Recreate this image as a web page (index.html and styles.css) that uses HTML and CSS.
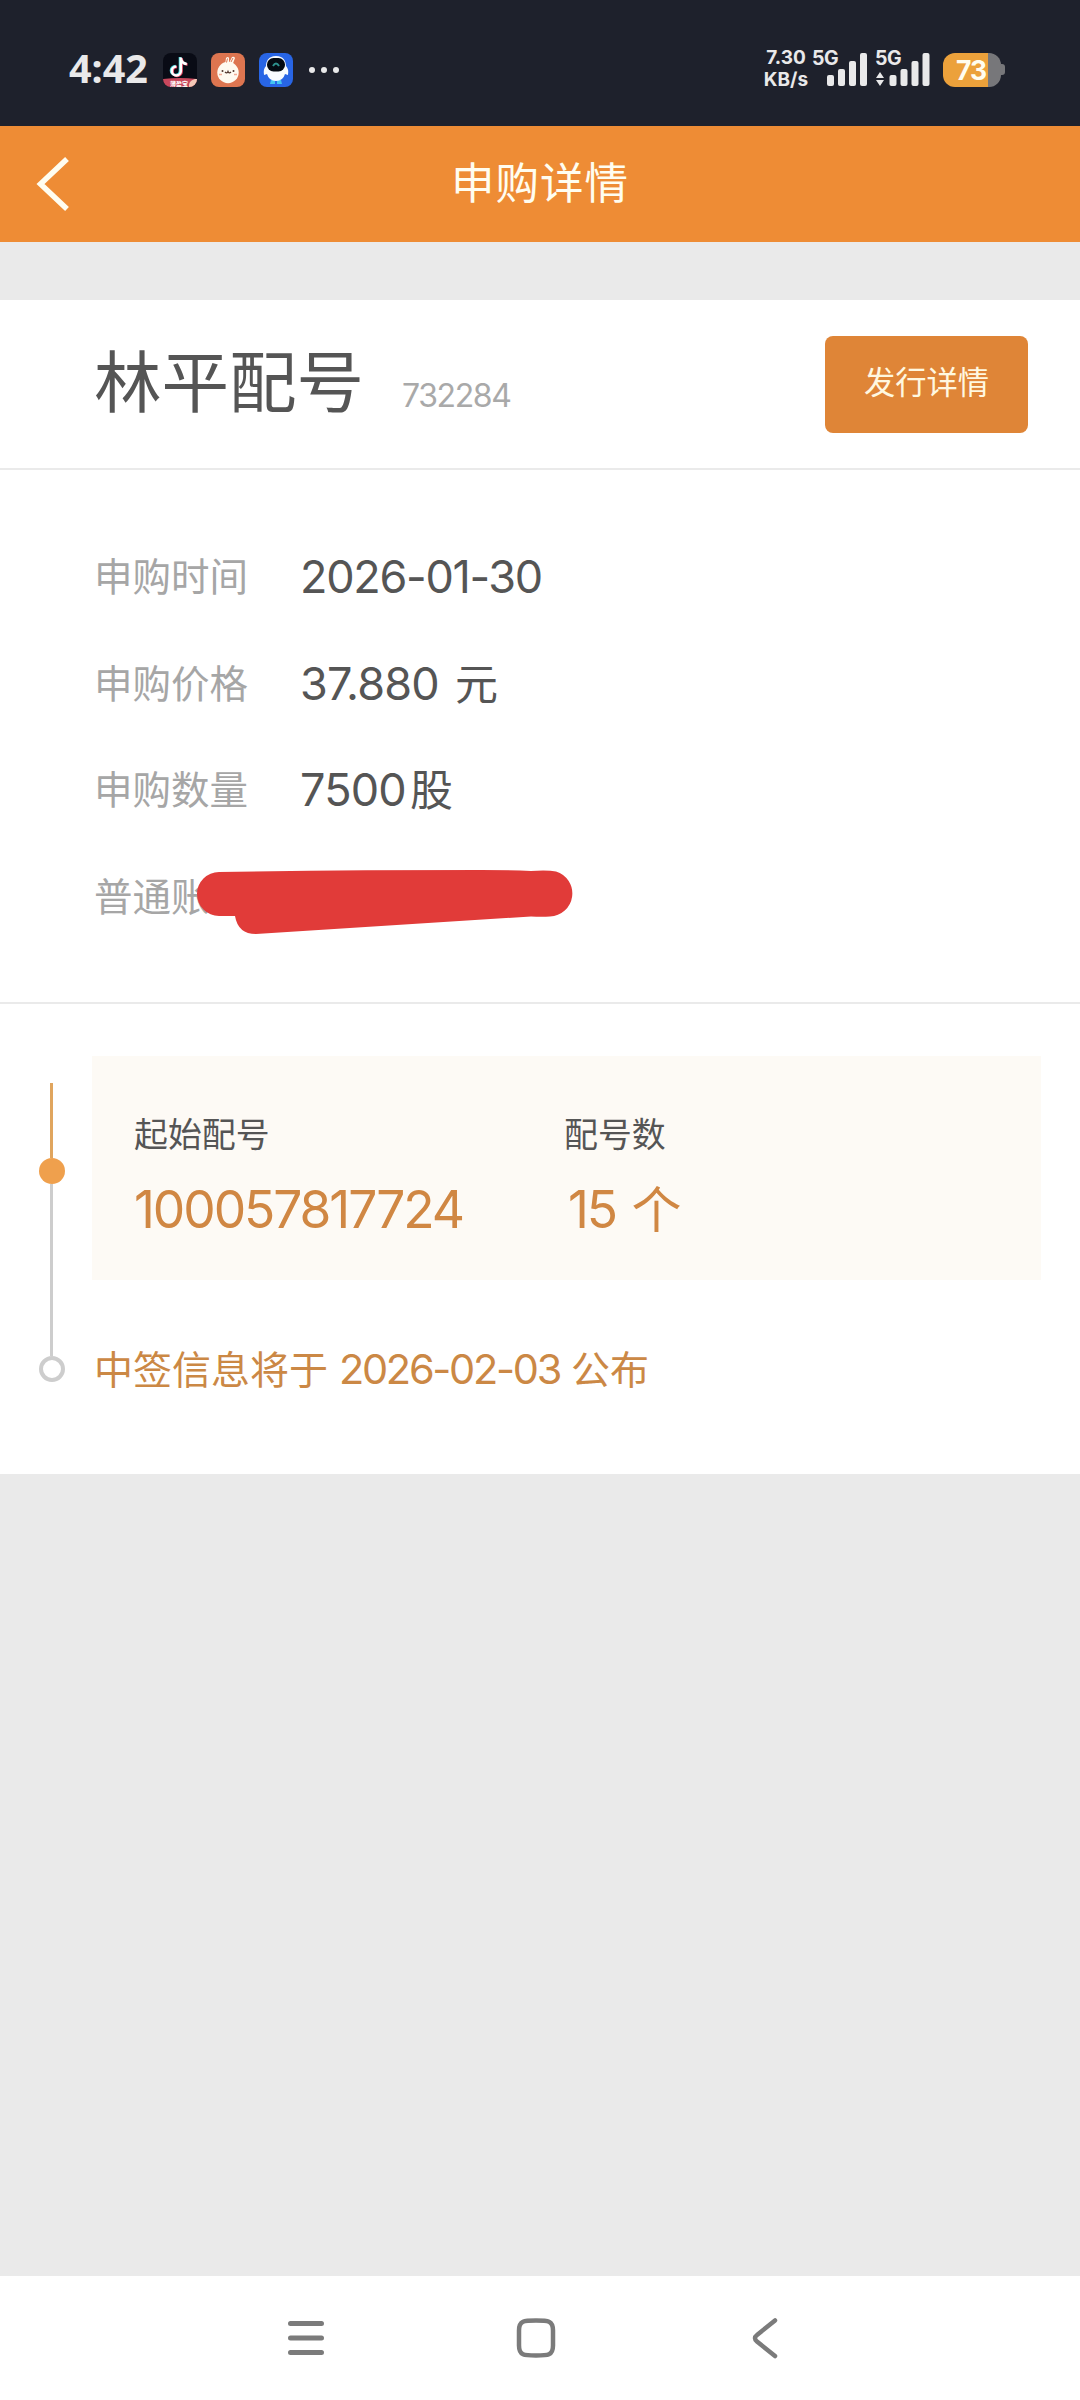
FILE: index.html
```html
<!DOCTYPE html>
<html lang="zh-CN">
<head>
<meta charset="utf-8">
<meta name="viewport" content="width=device-width, initial-scale=1">
<title>申购详情</title>
<link rel="stylesheet" href="styles.css">
</head>
<body>
<div class="status-bar">
  <span class="clock">4:42</span>
  <div class="apps">
    <svg width="34" height="34" viewBox="0 0 34 34">
      <defs><clipPath id="app"><rect width="34" height="34" rx="8"/></clipPath></defs>
      <g clip-path="url(#app)">
        <rect width="34" height="34" fill="#090b15"/>
        <g fill="none" stroke-width="2.600">
          <path d="M17 4v13.500a4.500 4.500 0 1 1-4.500-4.500M17 5q1 5 6 5.500" stroke="#43d5dc"/>
          <path d="M18.600 5v13.500a4.500 4.500 0 1 1-4.500-4.500M18.600 6q1 5 6 5.500" stroke="#e74563"/>
          <path d="M17.800 4.500v13.500a4.500 4.500 0 1 1-4.500-4.500M17.800 5.500q1 5 6 5.500" stroke="#fff"/>
        </g>
        <path d="M0 26q17-2 34 0v8H0z" fill="#c9485d"/>
        <path d="M26 34q-1-6 6-8h2v8z" fill="#f5c9b8"/>
        <text class="app-label" x="7" y="32.500">薄盈宝</text>
      </g>
    </svg>
    <svg width="34" height="34" viewBox="0 0 34 34">
      <rect width="34" height="34" rx="8" fill="#dd7550"/>
      <g fill="#fffaf0">
        <path d="M14 12l1-7q2-2 3 0v5l3-6q2-1 3 1l-3 8z"/>
        <circle cx="17" cy="19.500" r="10.700"/>
      </g>
      <path d="M16.500 5.500l-1 4M22 5l-2 4" stroke="#dd7550"/>
      <circle cx="11.500" cy="18" r="1" fill="#54382f"/>
      <circle cx="22.500" cy="18" r="1" fill="#54382f"/>
      <path d="M14 19q2 2 3-.5q1 2.500 3 .5" fill="none" stroke="#54382f" stroke-width="1.300"/>
      <path d="M8 21.500h3M23 21.500h3" stroke="#f2ab95" stroke-width="1.500"/>
    </svg>
    <svg width="34" height="34" viewBox="0 0 34 34">
      <rect width="34" height="34" rx="8" fill="#2865e5"/>
      <path d="M12 27h4v4h-5zM18 27h4l1 4h-5z" fill="#43c4ef"/>
      <path d="M17 3c8 0 10 6 10 10q3 3 2 9l-3-1q-2 7-9 7t-9-7l-3 1q-1-6 2-9C7 9 9 3 17 3z" fill="#f8fbff"/>
      <rect x="8" y="5" width="18" height="13.500" rx="6.500" fill="#050b13"/>
      <path d="M14 13q3-5 6 0" fill="none" stroke="#2d918e" stroke-width="2"/>
    </svg>
  </div>
  <svg class="more" width="30" height="6" viewBox="0 0 30 6" fill="#e9e9ea">
    <circle cx="3" cy="3" r="3"/><circle cx="15" cy="3" r="3"/><circle cx="27" cy="3" r="3"/>
  </svg>
  <div class="speed"><span>7.30</span><span>KB/s</span></div>
  <div class="signal">
    <span>5G</span>
    <svg width="40" height="33" viewBox="0 0 40 33" fill="#e9e9ea">
      <rect y="22" width="7" height="11" rx="2"/>
      <rect x="11" y="16" width="7" height="17" rx="2"/>
      <rect x="22" y="8" width="7" height="25" rx="2"/>
      <rect x="33" width="7" height="33" rx="2"/>
    </svg>
  </div>
  <div class="signal second">
    <span>5G</span>
    <svg width="54" height="33" viewBox="0 0 54 33" fill="#e9e9ea">
      <path d="M0 25l4-6 4 6zM0 27h8l-4 6z"/>
      <rect x="13.500" y="22" width="7" height="11" rx="2"/>
      <rect x="24.500" y="16" width="7" height="17" rx="2"/>
      <rect x="35.500" y="8" width="7" height="25" rx="2"/>
      <rect x="46.500" width="7" height="33" rx="2"/>
    </svg>
  </div>
  <div class="battery"><span>73</span></div>
</div>

<div class="header">
  <svg class="back" width="36" height="56" viewBox="0 0 36 56">
    <path d="M33 3L6.500 28L33 53" fill="none" stroke="#fffdf0" stroke-width="5.500"/>
  </svg>
  <h1>申购详情</h1>
</div>

<div class="content">
  <div class="stock">
    <h2>林平配号</h2>
    <span class="code">732284</span>
    <button type="button">发行详情</button>
  </div>

  <div class="info">
    <div class="row"><span class="label">申购时间</span><span class="value"><span class="num">2026-01-30</span></span></div>
    <div class="row"><span class="label">申购价格</span><span class="value amount"><span class="num">37.880</span> 元</span></div>
    <div class="row"><span class="label">申购数量</span><span class="value amount"><span class="num">7500</span>股</span></div>
    <div class="row">
      <span class="label">普通账户</span>
      <svg class="mask" width="380" height="66" viewBox="0 0 380 66">
        <path d="M23 3Q150 1 285 1Q315 1 335 2Q352 1 360 2.500A23 23 0 0 1 354 47.500Q346 48 335 47.500L60 65Q42 65 39 47H23A22 22 0 0 1 23 3z" fill="#e13b39"/>
      </svg>
    </div>
  </div>

  <div class="result">
    <div class="timeline">
      <span class="line done"></span>
      <span class="dot"></span>
      <span class="line"></span>
      <span class="ring"></span>
    </div>
    <div class="steps">
      <div class="card">
        <div class="col">
          <span class="name">起始配号</span>
          <span class="big">100057817724</span>
        </div>
        <div class="col">
          <span class="name">配号数</span>
          <span class="big count">15 <span class="unit">个</span></span>
        </div>
      </div>
      <p class="notice">中签信息将于 <span class="num">2026-02-03</span> 公布</p>
    </div>
  </div>
</div>

<div class="nav-bar">
  <svg width="40" height="44" viewBox="0 0 40 44">
    <path d="M4.500 7.500h31M4.500 22h31M4.500 36.500h31" stroke="#7b7b7b" stroke-width="5" stroke-linecap="round"/>
  </svg>
  <svg width="40" height="44" viewBox="0 0 40 44">
    <path d="M20 4.500c12 0 17 0 17 10v15c0 10-5 10-17 10s-17 0-17-10v-15c0-10 5-10 17-10z" fill="none" stroke="#7b7b7b" stroke-width="4.500"/>
  </svg>
  <svg width="40" height="44" viewBox="0 0 40 44">
    <path d="M30 4.500L12 19q-4 3 0 6.500L30 40" fill="none" stroke="#7b7b7b" stroke-width="4.500" stroke-linecap="round"/>
  </svg>
</div>
</body>
</html>
```
FILE: styles.css
```css
* {
  box-sizing: border-box;
}
body {
  margin: 0;
  width: 1080px;
  height: 2400px;
  display: flex;
  flex-direction: column;
  background-color: #eaeaea;
  color: #555;
  font-family: Inter, "Noto Sans CJK SC", sans-serif;
  line-height: 1.2;
}
svg {
  display: block;
  flex: none;
}

/* phone status bar */
.status-bar {
  height: 126px;
  padding: 14px 75px 0 69px;
  display: flex;
  align-items: center;
  background-color: #1e212c;
  color: #e9e9ea;
  font-weight: 700;
  line-height: 1;
}
.clock {
  width: 94px;
  padding-bottom: 2px;
  font-family: "Noto Sans", sans-serif;
  font-size: 39.500px;
}
.apps {
  display: flex;
  gap: 14px;
}
.app-label {
  font-family: "Noto Sans CJK SC", sans-serif;
  font-size: 6px;
  fill: #fff;
}
.more {
  margin-left: 16px;
}
.speed {
  width: 48px;
  margin: 0 2px 3px auto;
  display: flex;
  flex-direction: column;
  align-items: center;
  gap: 3px;
  font-size: 19px;
}
.signal {
  width: 55px;
  height: 36px;
  display: flex;
  flex-direction: column;
  align-items: flex-end;
  font-size: 19.500px;
  letter-spacing: -0.5px;
}
.signal span {
  align-self: flex-start;
  height: 2px;
  margin-top: -3px;
  margin-bottom: 2px;
}
.signal.second {
  margin-left: 8px;
}
.battery {
  position: relative;
  width: 58px;
  height: 34px;
  margin: 0 4px 0 13px;
  padding-left: 13px;
  border-radius: 12px;
  background: linear-gradient(to right, #eca13b 45px, #77777a 45px);
  color: #fffdf0;
  font-size: 26.500px;
  line-height: 34px;
  letter-spacing: -1px;
}
.battery:after {
  position: absolute;
  content: "";
  left: 58px;
  top: 11px;
  width: 4px;
  height: 11px;
  border-radius: 0 3px 3px 0;
  background-color: #77777a;
}

.header {
  height: 116px;
  display: grid;
  grid-template-columns: 100px 1fr 100px;
  align-items: center;
  background-color: #ee8c35;
  color: #fffdf0;
}
.back {
  margin-left: 34px;
}
h1 {
  margin: 0 0 2px;
  text-align: center;
  font-size: 43.500px;
  font-weight: 400;
  letter-spacing: 1px;
}

.content {
  height: 1174px;
  margin-top: 58px;
  background-color: #fff;
}
.stock {
  height: 170px;
  padding: 0 52px 0 94px;
  display: flex;
  align-items: center;
  border-bottom: 2px solid #eaeaea;
}
h2 {
  margin: 0 0 3px;
  font-size: 67.500px;
  font-weight: 400;
  line-height: 160px;
}
.code {
  margin: 25px auto 0 38px;
  color: #a9a9a9;
  font-size: 32px;
  letter-spacing: -1.400px;
}
button {
  width: 203px;
  height: 97px;
  padding: 0 0 3px;
  border: none;
  border-radius: 8px;
  background-color: #df8537;
  color: #fff8e0;
  font-family: inherit;
  font-size: 31.300px;
  line-height: 40px;
}

.info {
  height: 534px;
  padding: 54px 94px 0;
  border-bottom: 2px solid #eaeaea;
}
.row {
  position: relative;
  height: 106.500px;
  display: flex;
  align-items: center;
}
.label {
  width: 206px;
  color: #a6a6a6;
  font-size: 38.500px;
}
.value {
  font-size: 43px;
  line-height: 60px;
}
.value .num {
  font-size: 45px;
  line-height: 1;
  letter-spacing: -1.300px;
}
.amount .num {
  margin-right: 4px;
  letter-spacing: -0.800px;
}
/* red marker stroke hiding the account */
.mask {
  position: absolute;
  left: 102px;
  top: 25px;
}

.result {
  display: flex;
  padding-top: 52px;
}
.timeline {
  width: 92px;
  padding: 27px 0 0 39px;
  display: flex;
  flex-direction: column;
}
.line {
  width: 3px;
  height: 172px;
  margin-left: 11px;
  background-color: #cdcdcd;
}
.line.done {
  height: 75px;
  background-color: #e0a55e;
}
.dot {
  width: 26px;
  height: 26px;
  border-radius: 50%;
  background-color: #efa04d;
}
.ring {
  width: 26px;
  height: 26px;
  border: 4px solid #cdcdcd;
  border-radius: 50%;
}
.card {
  width: 949px;
  height: 224px;
  padding: 53px 42px 0;
  display: flex;
  background-color: #fdfaf5;
}
.col {
  width: 430px;
  display: flex;
  flex-direction: column;
}
.name {
  height: 50px;
  font-size: 33.900px;
  line-height: 52px;
}
.big {
  height: 100px;
  color: #d08743;
  font-size: 51.500px;
  line-height: 100px;
  letter-spacing: -2.100px;
}
.count {
  padding-left: 4px;
}
.unit {
  margin-left: 3px;
  font-size: 50px;
}
.notice {
  margin: 62px 0 0 2px;
  color: #cb8845;
  font-size: 39px;
  line-height: 56px;
}
.notice .num {
  font-size: 41.500px;
  letter-spacing: -2.300px;
  line-height: 1;
}

.nav-bar {
  height: 124px;
  margin-top: auto;
  padding: 0 295px 0 286px;
  display: flex;
  align-items: center;
  justify-content: space-between;
  background-color: #fff;
}
```
